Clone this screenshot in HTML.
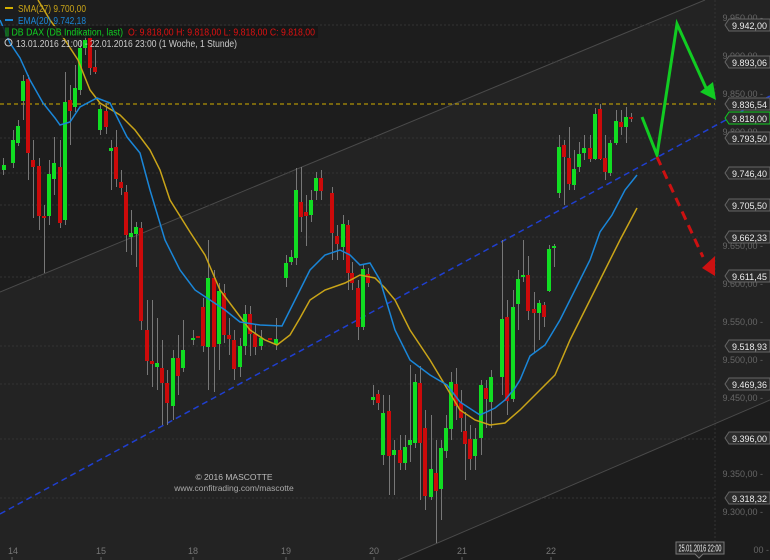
<!DOCTYPE html>
<html><head><meta charset="utf-8"><style>
html,body{margin:0;padding:0;background:#1c1c1c;}
svg{display:block;font-family:"Liberation Sans",sans-serif;}
</style></head><body>
<svg width="770" height="560" viewBox="0 0 770 560" xmlns="http://www.w3.org/2000/svg">
<rect width="770" height="560" fill="#1d1d1d"/>
<polygon points="0,292 705,0 770,0 770,400 398,560 0,560" fill="#232323"/>
<polygon points="398,560 770,400 770,560" fill="#1c1c1c"/>
<line x1="0" y1="292" x2="705" y2="0" stroke="#4a4a4a" stroke-width="1"/>
<line x1="398" y1="560" x2="770" y2="400" stroke="#4a4a4a" stroke-width="1"/>
<g stroke="#333" stroke-width="1" stroke-dasharray="2,2">
<line x1="0" y1="25" x2="715" y2="25"/><line x1="0" y1="62" x2="715" y2="62"/>
<line x1="0" y1="138" x2="715" y2="138"/><line x1="0" y1="173" x2="715" y2="173"/>
<line x1="0" y1="205" x2="715" y2="205"/><line x1="0" y1="237" x2="715" y2="237"/>
<line x1="0" y1="277" x2="715" y2="277"/><line x1="0" y1="346" x2="715" y2="346"/>
<line x1="0" y1="384" x2="715" y2="384"/><line x1="0" y1="439" x2="715" y2="439"/>
<line x1="0" y1="498" x2="715" y2="498"/>
<line x1="715" y1="0" x2="715" y2="545"/>
</g>
<line x1="0" y1="104" x2="715" y2="104" stroke="#d4b000" stroke-width="1" stroke-dasharray="4,3"/>
<line x1="0" y1="514" x2="770" y2="96" stroke="#1f3fd0" stroke-width="1.5" stroke-dasharray="6,4"/>
<g stroke="#777" stroke-width="1">
<line x1="3.5" y1="158" x2="3.5" y2="175"/><line x1="13.5" y1="130" x2="13.5" y2="168"/><line x1="18.5" y1="120" x2="18.5" y2="146"/><line x1="23.5" y1="75" x2="23.5" y2="120"/><line x1="28.5" y1="75" x2="28.5" y2="180"/><line x1="33.5" y1="140" x2="33.5" y2="218"/><line x1="39.5" y1="158" x2="39.5" y2="230"/><line x1="44.5" y1="205" x2="44.5" y2="273"/><line x1="49.5" y1="160" x2="49.5" y2="225"/><line x1="54.5" y1="137" x2="54.5" y2="195"/><line x1="60.5" y1="140" x2="60.5" y2="228"/><line x1="65.5" y1="72" x2="65.5" y2="225"/><line x1="70.5" y1="85" x2="70.5" y2="145"/><line x1="75.5" y1="65" x2="75.5" y2="112"/><line x1="80.5" y1="40" x2="80.5" y2="95"/><line x1="85.5" y1="30" x2="85.5" y2="55"/><line x1="90.5" y1="30" x2="90.5" y2="75"/><line x1="95.5" y1="50" x2="95.5" y2="74"/><line x1="100.5" y1="105" x2="100.5" y2="135"/><line x1="106.5" y1="103" x2="106.5" y2="134"/><line x1="111.5" y1="140" x2="111.5" y2="190"/><line x1="116.5" y1="130" x2="116.5" y2="187"/><line x1="121.5" y1="170" x2="121.5" y2="195"/><line x1="126.5" y1="185" x2="126.5" y2="252"/><line x1="131.5" y1="210" x2="131.5" y2="255"/><line x1="136.5" y1="222" x2="136.5" y2="267"/><line x1="141.5" y1="222" x2="141.5" y2="330"/><line x1="147.5" y1="300" x2="147.5" y2="375"/><line x1="152.5" y1="300" x2="152.5" y2="387"/><line x1="157.5" y1="318" x2="157.5" y2="390"/><line x1="162.5" y1="340" x2="162.5" y2="425"/><line x1="167.5" y1="370" x2="167.5" y2="425"/><line x1="173.5" y1="350" x2="173.5" y2="420"/><line x1="178.5" y1="335" x2="178.5" y2="395"/><line x1="183.5" y1="320" x2="183.5" y2="372"/><line x1="193.5" y1="330" x2="193.5" y2="345"/><line x1="203.5" y1="298" x2="203.5" y2="352"/><line x1="208.5" y1="240" x2="208.5" y2="390"/><line x1="214.5" y1="270" x2="214.5" y2="392"/><line x1="219.5" y1="283" x2="219.5" y2="370"/><line x1="224.5" y1="284" x2="224.5" y2="343"/><line x1="229.5" y1="318" x2="229.5" y2="355"/><line x1="234.5" y1="330" x2="234.5" y2="380"/><line x1="240.5" y1="338" x2="240.5" y2="377"/><line x1="245.5" y1="305" x2="245.5" y2="355"/><line x1="250.5" y1="306" x2="250.5" y2="356"/><line x1="255.5" y1="325" x2="255.5" y2="355"/><line x1="261.5" y1="330" x2="261.5" y2="350"/><line x1="276.5" y1="318" x2="276.5" y2="350"/><line x1="286.5" y1="255" x2="286.5" y2="287"/><line x1="291.5" y1="250" x2="291.5" y2="265"/><line x1="296.5" y1="168" x2="296.5" y2="265"/><line x1="301.5" y1="167" x2="301.5" y2="232"/><line x1="306.5" y1="195" x2="306.5" y2="246"/><line x1="311.5" y1="190" x2="311.5" y2="222"/><line x1="316.5" y1="172" x2="316.5" y2="200"/><line x1="321.5" y1="170" x2="321.5" y2="200"/><line x1="332.5" y1="187" x2="332.5" y2="260"/><line x1="337.5" y1="225" x2="337.5" y2="260"/><line x1="343.5" y1="215" x2="343.5" y2="260"/><line x1="348.5" y1="220" x2="348.5" y2="290"/><line x1="352.5" y1="262" x2="352.5" y2="290"/><line x1="358.5" y1="280" x2="358.5" y2="340"/><line x1="363.5" y1="265" x2="363.5" y2="330"/><line x1="368.5" y1="268" x2="368.5" y2="287"/><line x1="373.5" y1="385" x2="373.5" y2="405"/><line x1="378.5" y1="390" x2="378.5" y2="410"/><line x1="383.5" y1="395" x2="383.5" y2="465"/><line x1="389.5" y1="395" x2="389.5" y2="495"/><line x1="394.5" y1="440" x2="394.5" y2="495"/><line x1="400.5" y1="435" x2="400.5" y2="470"/><line x1="405.5" y1="435" x2="405.5" y2="470"/><line x1="410.5" y1="365" x2="410.5" y2="462"/><line x1="415.5" y1="374" x2="415.5" y2="448"/><line x1="420.5" y1="366" x2="420.5" y2="500"/><line x1="425.5" y1="410" x2="425.5" y2="510"/><line x1="431.5" y1="415" x2="431.5" y2="500"/><line x1="436.5" y1="440" x2="436.5" y2="543"/><line x1="441.5" y1="440" x2="441.5" y2="520"/><line x1="446.5" y1="415" x2="446.5" y2="458"/><line x1="451.5" y1="372" x2="451.5" y2="440"/><line x1="456.5" y1="368" x2="456.5" y2="420"/><line x1="461.5" y1="390" x2="461.5" y2="432"/><line x1="465.5" y1="412" x2="465.5" y2="480"/><line x1="470.5" y1="425" x2="470.5" y2="470"/><line x1="475.5" y1="428" x2="475.5" y2="470"/><line x1="481.5" y1="380" x2="481.5" y2="455"/><line x1="486.5" y1="380" x2="486.5" y2="428"/><line x1="491.5" y1="370" x2="491.5" y2="428"/><line x1="502.5" y1="240" x2="502.5" y2="395"/><line x1="507.5" y1="300" x2="507.5" y2="415"/><line x1="513.5" y1="290" x2="513.5" y2="402"/><line x1="518.5" y1="270" x2="518.5" y2="330"/><line x1="523.5" y1="240" x2="523.5" y2="282"/><line x1="528.5" y1="256" x2="528.5" y2="320"/><line x1="534.5" y1="292" x2="534.5" y2="353"/><line x1="539.5" y1="300" x2="539.5" y2="340"/><line x1="544.5" y1="302" x2="544.5" y2="327"/><line x1="549.5" y1="245" x2="549.5" y2="292"/><line x1="554.5" y1="244" x2="554.5" y2="267"/><line x1="559.5" y1="135" x2="559.5" y2="198"/><line x1="564.5" y1="140" x2="564.5" y2="205"/><line x1="569.5" y1="127" x2="569.5" y2="190"/><line x1="574.5" y1="150" x2="574.5" y2="190"/><line x1="579.5" y1="142" x2="579.5" y2="172"/><line x1="584.5" y1="135" x2="584.5" y2="160"/><line x1="590.5" y1="135" x2="590.5" y2="162"/><line x1="595.5" y1="108" x2="595.5" y2="160"/><line x1="600.5" y1="104" x2="600.5" y2="160"/><line x1="605.5" y1="135" x2="605.5" y2="180"/><line x1="610.5" y1="140" x2="610.5" y2="176"/><line x1="616.5" y1="110" x2="616.5" y2="145"/><line x1="621.5" y1="110" x2="621.5" y2="135"/><line x1="626.5" y1="107" x2="626.5" y2="143"/><line x1="631.5" y1="113" x2="631.5" y2="122"/>
</g>
<g fill="#11dd22">
<rect x="2" y="165" width="4" height="5"/><rect x="11" y="140" width="4" height="23"/><rect x="16" y="126" width="4" height="17"/><rect x="21" y="81" width="4" height="20"/><rect x="47" y="174" width="4" height="42"/><rect x="52" y="163" width="4" height="16"/><rect x="63" y="102" width="4" height="118"/><rect x="73" y="88" width="4" height="19"/><rect x="78" y="48" width="4" height="42"/><rect x="83" y="40" width="4" height="8"/><rect x="98" y="109" width="4" height="21"/><rect x="109" y="148" width="4" height="3"/><rect x="129" y="233" width="4" height="4"/><rect x="134" y="227" width="4" height="7"/><rect x="155" y="363" width="4" height="4"/><rect x="171" y="358" width="4" height="48"/><rect x="181" y="350" width="4" height="18"/><rect x="191" y="338" width="4" height="2"/><rect x="206" y="278" width="4" height="69"/><rect x="217" y="291" width="4" height="53"/><rect x="238" y="346" width="4" height="21"/><rect x="243" y="314" width="4" height="32"/><rect x="259" y="338" width="4" height="8"/><rect x="274" y="339" width="4" height="5"/><rect x="284" y="263" width="4" height="15"/><rect x="289" y="257" width="4" height="5"/><rect x="294" y="190" width="4" height="68"/><rect x="309" y="200" width="4" height="15"/><rect x="314" y="178" width="4" height="13"/><rect x="341" y="224" width="4" height="23"/><rect x="361" y="269" width="4" height="58"/><rect x="371" y="397" width="4" height="3"/><rect x="381" y="413" width="4" height="42"/><rect x="392" y="450" width="4" height="5"/><rect x="403" y="447" width="4" height="16"/><rect x="408" y="440" width="4" height="5"/><rect x="413" y="382" width="4" height="61"/><rect x="429" y="469" width="4" height="28"/><rect x="439" y="448" width="4" height="41"/><rect x="444" y="428" width="4" height="23"/><rect x="449" y="382" width="4" height="47"/><rect x="473" y="439" width="4" height="17"/><rect x="479" y="385" width="4" height="53"/><rect x="489" y="377" width="4" height="25"/><rect x="500" y="319" width="4" height="58"/><rect x="511" y="307" width="4" height="92"/><rect x="516" y="279" width="4" height="25"/><rect x="521" y="275" width="4" height="2"/><rect x="537" y="303" width="4" height="10"/><rect x="547" y="249" width="4" height="42"/><rect x="552" y="246" width="4" height="2"/><rect x="557" y="147" width="4" height="46"/><rect x="572" y="169" width="4" height="16"/><rect x="577" y="154" width="4" height="13"/><rect x="582" y="148" width="4" height="5"/><rect x="593" y="114" width="4" height="45"/><rect x="608" y="143" width="4" height="30"/><rect x="614" y="121" width="4" height="22"/><rect x="624" y="117" width="4" height="10"/>
</g>
<g fill="#cc0a0a">
<rect x="26" y="79" width="4" height="74"/><rect x="31" y="160" width="4" height="7"/><rect x="37" y="166" width="4" height="50"/><rect x="42" y="216" width="4" height="2"/><rect x="58" y="167" width="4" height="56"/><rect x="68" y="100" width="4" height="11"/><rect x="88" y="38" width="4" height="30"/><rect x="93" y="67" width="4" height="5"/><rect x="104" y="111" width="4" height="16"/><rect x="114" y="147" width="4" height="32"/><rect x="119" y="182" width="4" height="6"/><rect x="124" y="192" width="4" height="43"/><rect x="139" y="228" width="4" height="93"/><rect x="145" y="330" width="4" height="31"/><rect x="150" y="361" width="4" height="3"/><rect x="160" y="368" width="4" height="15"/><rect x="165" y="383" width="4" height="20"/><rect x="176" y="358" width="4" height="18"/><rect x="196" y="336" width="4" height="2"/><rect x="201" y="307" width="4" height="39"/><rect x="212" y="278" width="4" height="69"/><rect x="222" y="293" width="4" height="42"/><rect x="227" y="335" width="4" height="4"/><rect x="232" y="340" width="4" height="29"/><rect x="248" y="314" width="4" height="20"/><rect x="253" y="334" width="4" height="13"/><rect x="268" y="338" width="4" height="2"/><rect x="299" y="202" width="4" height="15"/><rect x="304" y="212" width="4" height="4"/><rect x="319" y="178" width="4" height="13"/><rect x="330" y="193" width="4" height="40"/><rect x="335" y="236" width="4" height="8"/><rect x="346" y="225" width="4" height="48"/><rect x="350" y="273" width="4" height="10"/><rect x="356" y="288" width="4" height="39"/><rect x="366" y="274" width="4" height="9"/><rect x="376" y="394" width="4" height="9"/><rect x="387" y="411" width="4" height="45"/><rect x="398" y="450" width="4" height="13"/><rect x="418" y="383" width="4" height="60"/><rect x="423" y="428" width="4" height="68"/><rect x="434" y="473" width="4" height="18"/><rect x="454" y="384" width="4" height="22"/><rect x="459" y="403" width="4" height="15"/><rect x="463" y="431" width="4" height="13"/><rect x="468" y="439" width="4" height="20"/><rect x="484" y="388" width="4" height="11"/><rect x="505" y="317" width="4" height="84"/><rect x="526" y="275" width="4" height="36"/><rect x="532" y="309" width="4" height="4"/><rect x="542" y="305" width="4" height="12"/><rect x="562" y="145" width="4" height="12"/><rect x="567" y="158" width="4" height="26"/><rect x="588" y="148" width="4" height="11"/><rect x="598" y="109" width="4" height="50"/><rect x="603" y="158" width="4" height="14"/><rect x="619" y="122" width="4" height="5"/><rect x="629" y="117" width="4" height="2"/>
</g>
<polyline fill="none" stroke="#c9a418" stroke-width="1.5" points="38,0 50,20 65,40 78,60 90,90 100,103 120,115 135,130 150,150 160,170 170,200 190,232 205,255 220,290 235,310 250,330 265,340 277,345 290,335 300,318 310,300 325,290 345,283 360,275 375,278 385,288 395,300 410,330 430,360 445,385 460,410 475,420 490,425 505,423 520,410 540,390 555,375 570,340 590,300 605,270 620,240 637,208"/>
<polyline fill="none" stroke="#1a86d8" stroke-width="1.5" points="0,20 10,43 20,58 30,80 43,103 55,118 60,125 70,122 80,107 97,98 110,103 127,137 140,153 150,190 165,240 180,270 195,290 210,300 225,310 240,322 260,325 282,326 295,300 310,270 325,255 340,250 350,255 360,265 370,263 380,280 395,330 410,360 430,375 447,385 460,402 480,415 495,408 505,400 515,388 520,380 530,356 545,345 560,320 575,290 590,260 600,232 612,215 625,190 637,175"/>
<polyline fill="none" stroke="#11cc22" stroke-width="3" points="642,117 657,155 677,24 706,88"/>
<polygon points="700,92 716,100 713,82" fill="#11cc22"/>
<line x1="657" y1="157" x2="703" y2="257" stroke="#cc1111" stroke-width="3" stroke-dasharray="9,6"/>
<polygon points="702,268 715,276 715,256" fill="#cc1111"/>
<g font-size="10">
<rect x="5" y="7" width="8" height="2" fill="#d4b000"/><text x="18" y="12" fill="#c9a418" textLength="68" lengthAdjust="spacingAndGlyphs">SMA(27)  9.700,00</text>
<rect x="5" y="19" width="8" height="2" fill="#1a86d8"/><text x="18" y="24" fill="#1a86d8" textLength="68" lengthAdjust="spacingAndGlyphs">EMA(20)  9.742,18</text>
<rect x="0" y="26" width="318" height="12" fill="#151515" opacity="0.85"/>
<text x="5" y="35.5" fill="#11cc22" textLength="118" lengthAdjust="spacingAndGlyphs">⫼ DB DAX (DB Indikation, last)</text>
<text x="128" y="35.5" fill="#dd1111" textLength="187" lengthAdjust="spacingAndGlyphs">O: 9.818,00  H: 9.818,00  L: 9.818,00  C: 9.818,00</text>
<circle cx="8.5" cy="42.5" r="3.5" fill="none" stroke="#ccc" stroke-width="1"/>
<text x="16" y="47" fill="#ccc" textLength="221" lengthAdjust="spacingAndGlyphs">13.01.2016 21:00 - 22.01.2016 23:00 (1 Woche, 1 Stunde)</text>
</g>
<text x="234" y="480" font-size="8.5" fill="#bbb" text-anchor="middle">© 2016 MASCOTTE</text>
<text x="234" y="491" font-size="8.5" fill="#aaa" text-anchor="middle">www.confitrading.com/mascotte</text>
<g font-size="9" fill="#666" text-anchor="end">
<text x="763" y="21">9.950,00 -</text><text x="763" y="59">9.900,00 -</text><text x="763" y="97">9.850,00 -</text><text x="763" y="135">9.800,00 -</text><text x="763" y="249">9.650,00 -</text><text x="763" y="287">9.600,00 -</text><text x="763" y="325">9.550,00 -</text><text x="763" y="363">9.500,00 -</text><text x="763" y="401">9.450,00 -</text><text x="763" y="477">9.350,00 -</text><text x="763" y="515">9.300,00 -</text><text x="769" y="553">00 -</text>
</g>
<g font-size="9.5" fill="#eee">
<g stroke="#666" stroke-width="1" fill="#2b2b2b">
<path d="M729,19 H770 V31 H729 L725,25 Z"/><path d="M729,56 H770 V68 H729 L725,62 Z"/><path d="M729,98 H770 V110 H729 L725,104 Z"/><path d="M729,112 H770 V124 H729 L725,118 Z" stroke="#11cc22"/><path d="M729,132 H770 V144 H729 L725,138 Z"/><path d="M729,167 H770 V179 H729 L725,173 Z"/><path d="M729,199 H770 V211 H729 L725,205 Z"/><path d="M729,231 H770 V243 H729 L725,237 Z"/><path d="M729,270 H770 V282 H729 L725,276 Z"/><path d="M729,340 H770 V352 H729 L725,346 Z"/><path d="M729,378 H770 V390 H729 L725,384 Z"/><path d="M729,432 H770 V444 H729 L725,438 Z"/><path d="M729,492 H770 V504 H729 L725,498 Z"/>
</g>
<text x="732" y="29" textLength="35" lengthAdjust="spacingAndGlyphs">9.942,00</text><text x="732" y="66" textLength="35" lengthAdjust="spacingAndGlyphs">9.893,06</text><text x="732" y="108" textLength="35" lengthAdjust="spacingAndGlyphs">9.836,54</text><text x="732" y="122" textLength="35" lengthAdjust="spacingAndGlyphs">9.818,00</text><text x="732" y="142" textLength="35" lengthAdjust="spacingAndGlyphs">9.793,50</text><text x="732" y="177" textLength="35" lengthAdjust="spacingAndGlyphs">9.746,40</text><text x="732" y="209" textLength="35" lengthAdjust="spacingAndGlyphs">9.705,50</text><text x="732" y="241" textLength="35" lengthAdjust="spacingAndGlyphs">9.662,33</text><text x="732" y="280" textLength="35" lengthAdjust="spacingAndGlyphs">9.611,45</text><text x="732" y="350" textLength="35" lengthAdjust="spacingAndGlyphs">9.518,93</text><text x="732" y="388" textLength="35" lengthAdjust="spacingAndGlyphs">9.469,36</text><text x="732" y="442" textLength="35" lengthAdjust="spacingAndGlyphs">9.396,00</text><text x="732" y="502" textLength="35" lengthAdjust="spacingAndGlyphs">9.318,32</text>
</g>
<g font-size="9" fill="#777">
<text x="8" y="554">14</text><text x="96" y="554">15</text><text x="188" y="554">18</text><text x="281" y="554">19</text><text x="369" y="554">20</text><text x="457" y="554">21</text><text x="546" y="554">22</text>
</g>
<g stroke="#666"><line x1="12" y1="557" x2="12" y2="560"/><line x1="101" y1="557" x2="101" y2="560"/><line x1="193" y1="557" x2="193" y2="560"/><line x1="286" y1="557" x2="286" y2="560"/><line x1="374" y1="557" x2="374" y2="560"/><line x1="462" y1="557" x2="462" y2="560"/><line x1="551" y1="557" x2="551" y2="560"/></g>
<path d="M676,542 H724 V554 H703 L699,558 L695,554 H676 Z" fill="#2b2b2b" stroke="#777"/>
<text x="678.5" y="551.5" font-size="10" fill="#eee" textLength="43" lengthAdjust="spacingAndGlyphs">25.01.2016 22:00</text>
</svg>
</body></html>
